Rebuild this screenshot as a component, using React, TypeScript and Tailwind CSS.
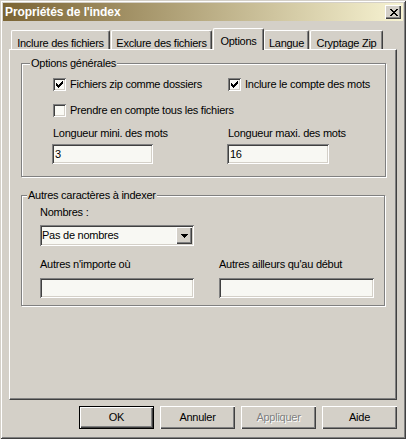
const raised =
  "shadow-[inset_1px_1px_#ffffff,inset_-1px_-1px_#404040,inset_-2px_-2px_#808080]";
const sunken =
  "shadow-[inset_1px_1px_#808080,inset_-1px_-1px_#ffffff,inset_2px_2px_#404040,inset_-2px_-2px_#d4d0c8]";

function CheckMark() {
  const cols = [2, 3, 4, 3, 2, 1, 0];
  return (
    <svg width="13" height="13" viewBox="0 0 13 13" shapeRendering="crispEdges">
      {cols.map((r, c) => (
        <rect key={c} x={3 + c} y={3 + r} width="1" height="3" fill="#000" />
      ))}
    </svg>
  );
}

function CheckBox({ checked, label }: { checked?: boolean; label: string }) {
  return (
    <div className="ml-[1px] flex h-[13px] items-center gap-[4px]">
      <div className={`h-[13px] w-[13px] shrink-0 bg-[#fafaf5] ${sunken}`}>{checked ? <CheckMark /> : null}</div>
      <span className="whitespace-nowrap leading-[13px]">{label}</span>
    </div>
  );
}

function Edit({ value, width }: { value?: string; width: string }) {
  return (
    <div className={`flex h-[20px] items-center bg-[#f8f8f3] pl-[3px] ${width} ${sunken}`}>
      <span className="leading-[13px]">{value}</span>
    </div>
  );
}

function CloseGlyph() {
  const rows = [
    [0, 1, 6, 7],
    [1, 2, 5, 6],
    [2, 3, 4, 5],
    [3, 4],
    [2, 3, 4, 5],
    [1, 2, 5, 6],
    [0, 1, 6, 7],
  ];
  return (
    <svg width="8" height="7" viewBox="0 0 8 7" shapeRendering="crispEdges">
      {rows.flatMap((xs, y) => xs.map((x) => <rect key={`${x}-${y}`} x={x} y={y} width="1" height="1" fill="#000" />))}
    </svg>
  );
}

function ArrowDown() {
  return (
    <svg width="7" height="4" viewBox="0 0 7 4" shapeRendering="crispEdges">
      <rect x="0" y="0" width="7" height="1" fill="#000" />
      <rect x="1" y="1" width="5" height="1" fill="#000" />
      <rect x="2" y="2" width="3" height="1" fill="#000" />
      <rect x="3" y="3" width="1" height="1" fill="#000" />
    </svg>
  );
}

const tabs = [
  { label: "Inclure des fichiers", cls: "ml-[2px] w-[99px]" },
  { label: "Exclure des fichiers", cls: "ml-[1px] w-[101px]" },
  { label: "Options", cls: "ml-[1px] w-[51px]", active: true },
  { label: "Langue", cls: "w-[45px]" },
  { label: "Cryptage Zip", cls: "ml-[1px] w-[73px]" },
];

export default function App() {
  return (
    <div className="flex h-[439px] w-[406px] flex-col bg-[#d4d0c8] p-[3px] font-['Liberation_Sans',Arial,sans-serif] text-[11px] tracking-[-0.25px] text-black shadow-[inset_1px_1px_#d4d0c8,inset_-1px_-1px_#404040,inset_2px_2px_#ffffff,inset_-2px_-2px_#808080]">
      {/* title bar */}
      <div className="flex h-[18px] items-center justify-between bg-[linear-gradient(90deg,#7b6434_0%,#a6966b_35%,#f7f3d2_100%)] pl-[2px] pr-[2px]">
        <span className="text-[12px] font-bold tracking-[-0.1px] text-white">Propriétés de l'index</span>
        <div className={`flex h-[14px] w-[16px] items-center justify-center bg-[#d4d0c8] pl-[1px] ${raised}`}>
          <CloseGlyph />
        </div>
      </div>

      {/* tabs + panel */}
      <div className="ml-[6px] mt-[7px] w-[388px]">
        <div className="flex h-[21px] items-end">
          {tabs.map((t) =>
            t.active ? (
              <div
                key={t.label}
                className={`relative z-10 -mb-[1px] flex h-[22px] items-start justify-center rounded-t-[2px] border-l border-r border-t border-l-white border-r-[#404040] border-t-white bg-[#d4d0c8] pt-[4px] shadow-[inset_-1px_0_#808080] ${t.cls}`}
              >
                {t.label}
              </div>
            ) : (
              <div
                key={t.label}
                className={`flex h-[19px] items-start justify-center rounded-t-[2px] border-l border-r border-t border-l-white border-r-[#404040] border-t-white pt-[4px] shadow-[inset_-1px_0_#808080] ${t.cls}`}
              >
                {t.label}
              </div>
            )
          )}
        </div>

        <div className="h-[351px] border border-b-[#404040] border-l-white border-r-[#404040] border-t-white pl-[11px] pt-[13px] shadow-[inset_-1px_-1px_#808080]">
          {/* group 1 */}
          <div className="relative h-[114px] w-[365px] border border-[#808080] pl-[30px] pt-[14px] shadow-[inset_1px_1px_#ffffff,1px_1px_#ffffff]">
            <span className="absolute -top-[7px] left-[8px] bg-[#d4d0c8] px-[1px] leading-[13px]">Options générales</span>
            <div className="grid grid-cols-[175px_1fr]">
              <CheckBox checked label="Fichiers zip comme dossiers" />
              <CheckBox checked label="Inclure le compte des mots" />
              <div className="col-span-2 mt-[13px]">
                <CheckBox label="Prendre en compte tous les fichiers" />
              </div>
              <span className="ml-[1px] mt-[10px] leading-[13px]">Longueur mini. des mots</span>
              <span className="ml-[1px] mt-[10px] leading-[13px]">Longueur maxi. des mots</span>
              <div className="mt-[4px]">
                <Edit value="3" width="w-[101px]" />
              </div>
              <div className="mt-[4px]">
                <Edit value="16" width="w-[102px]" />
              </div>
            </div>
          </div>

          {/* group 2 */}
          <div className="relative mt-[18px] h-[111px] w-[364px] border border-[#808080] pl-[18px] pt-[10px] shadow-[inset_1px_1px_#ffffff,1px_1px_#ffffff]">
            <span className="absolute -top-[7px] left-[5px] bg-[#d4d0c8] px-[1px] leading-[13px]">Autres caractères à indexer</span>
            <div className="leading-[13px]">Nombres :</div>
            <div className={`mt-[6px] flex h-[21px] w-[154px] items-center justify-between bg-[#f8f8f3] p-[2px] ${sunken}`}>
              <span className="pl-[0px] leading-[13px]">Pas de nombres</span>
              <div className={`flex h-[17px] w-[16px] items-center justify-center bg-[#d4d0c8] ${raised}`}>
                <ArrowDown />
              </div>
            </div>
            <div className="mt-[12px] grid grid-cols-[179px_1fr]">
              <span className="leading-[13px]">Autres n'importe où</span>
              <span className="leading-[13px]">Autres ailleurs qu'au début</span>
              <div className="mt-[7px]">
                <Edit width="w-[154px]" />
              </div>
              <div className="mt-[7px]">
                <Edit width="w-[155px]" />
              </div>
            </div>
          </div>
        </div>
      </div>

      {/* buttons */}
      <div className="ml-[76px] mt-[6px] flex gap-[6px]">
        <button className="h-[23px] w-[75px] border border-black bg-[#d4d0c8] shadow-[inset_1px_1px_#ffffff,inset_-1px_-1px_#404040,inset_-2px_-2px_#808080]">
          OK
        </button>
        <button className={`h-[23px] w-[75px] bg-[#d4d0c8] ${raised}`}>Annuler</button>
        <button className={`h-[23px] w-[75px] bg-[#d4d0c8] text-[#808080] [text-shadow:1px_1px_#ffffff] ${raised}`}>
          Appliquer
        </button>
        <button className={`h-[23px] w-[75px] bg-[#d4d0c8] ${raised}`}>Aide</button>
      </div>
    </div>
  );
}
